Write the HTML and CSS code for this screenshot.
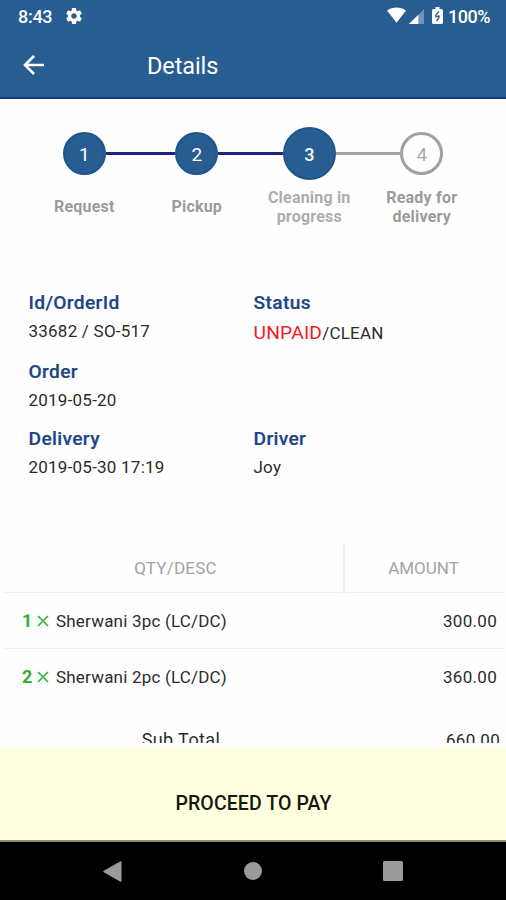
FILE: index.html
```html
<!DOCTYPE html>
<html lang="en">
<head>
<meta charset="utf-8">
<title>Details</title>
<link rel="stylesheet" href="styles.css">
</head>
<body>
<div class="screen">
  <header class="top">
    <div class="statusbar">
      <span class="clock">8:43</span>
      <svg class="gear" width="18" height="18" viewBox="2 2 20 20"><path fill="#fff" fill-rule="evenodd" d="M19.43 12.98c.04-.32.07-.64.07-.98s-.03-.66-.07-.98l2.11-1.65c.19-.15.24-.42.12-.64l-2-3.46c-.12-.22-.39-.3-.61-.22l-2.49 1c-.52-.4-1.08-.73-1.69-.98l-.38-2.65C14.46 2.18 14.25 2 14 2h-4c-.25 0-.46.18-.49.42l-.38 2.65c-.61.25-1.17.59-1.69.98l-2.49-1c-.23-.09-.49 0-.61.22l-2 3.46c-.13.22-.07.49.12.64l2.11 1.65c-.04.32-.07.65-.07.98s.03.66.07.98l-2.11 1.65c-.19.15-.24.42-.12.64l2 3.46c.12.22.39.3.61.22l2.49-1c.52.4 1.08.73 1.69.98l.38 2.65c.03.24.24.42.49.42h4c.25 0 .46-.18.49-.42l.38-2.65c.61-.25 1.17-.59 1.69-.98l2.49 1c.23.09.49 0 .61-.22l2-3.46c.12-.22.07-.49-.12-.64l-2.11-1.65zM12 15.500c-1.930 0-3.500-1.570-3.500-3.500s1.570-3.500 3.500-3.500 3.500 1.570 3.500 3.500-1.570 3.500-3.500 3.500z"/></svg>
      <svg class="wifi" width="19" height="16" viewBox="0 0 20 16" preserveAspectRatio="none"><path fill="#fff" d="M0 3.500C5.500-.6 14.500-.6 20 3.500L10 15.700z"/></svg>
      <svg class="signal" width="15" height="15" viewBox="0 0 16 16"><path fill="#6f93b8" d="M16 0v16H0z"/><path fill="#fff" d="M10 6v10H0z"/></svg>
      <svg class="battery" width="11" height="17" viewBox="0 0 11 17"><path fill="#fff" d="M3.500 0h4v2H9.500q1.500 0 1.500 1.500v12q0 1.500-1.500 1.500h-8Q0 17 0 15.500v-12Q0 2 1.500 2h2z"/><path fill="none" stroke="#275d90" stroke-width="1.300" d="M7 4.500L3.800 8.200v1.500L7 9v1.500L4.500 14"/></svg>
      <span class="percent">100%</span>
    </div>
    <div class="appbar">
      <svg class="back" width="22" height="20" viewBox="0 0 22 20"><path fill="none" stroke="#fff" stroke-width="2.600" d="M21 10H2.500M11 1L2 10l9 9"/></svg>
      <h1 class="title">Details</h1>
    </div>
  </header>

  <ol class="steps">
    <li class="step done"><div class="track"><span class="dot">1</span></div><div class="label">Request</div></li>
    <li class="step done"><div class="track"><span class="dot">2</span></div><div class="label">Pickup</div></li>
    <li class="step current"><div class="track"><span class="dot">3</span></div><div class="label">Cleaning in<br>progress</div></li>
    <li class="step todo"><div class="track"><span class="dot">4</span></div><div class="label">Ready for<br>delivery</div></li>
  </ol>

  <section class="info">
    <div class="field"><h2>Id/OrderId</h2><p>33682 / SO-517</p></div>
    <div class="field"><h2>Status</h2><p class="state"><span class="unpaid">UNPAID</span>/CLEAN</p></div>
    <div class="field wide"><h2>Order</h2><p>2019-05-20</p></div>
    <div class="field"><h2>Delivery</h2><p>2019-05-30 17:19</p></div>
    <div class="field"><h2>Driver</h2><p>Joy</p></div>
  </section>

  <section class="items">
    <div class="row head"><div class="desc">QTY/DESC</div><div class="amount">AMOUNT</div></div>
    <div class="row"><div class="desc"><b class="qty">1</b><svg class="times" width="12" height="12" viewBox="0 0 12 12"><path d="M1 1l10 10M11 1L1 11"/></svg><span>Sherwani 3pc (LC/DC)</span></div><div class="amount">300.00</div></div>
    <div class="row last"><div class="desc"><b class="qty">2</b><svg class="times" width="12" height="12" viewBox="0 0 12 12"><path d="M1 1l10 10M11 1L1 11"/></svg><span>Sherwani 2pc (LC/DC)</span></div><div class="amount">360.00</div></div>
    <div class="row total"><div class="desc">Sub Total</div><div class="amount">660.00</div></div>
  </section>

  <button class="pay">PROCEED TO PAY</button>
  <nav class="navbar">
    <svg width="19" height="21" viewBox="0 0 19 21"><path fill="#9b9b9b" d="M17.500.3q1-.5 1 .7v19q0 1.200-1 .7L.8 11.200q-1-.7 0-1.400z"/></svg>
    <svg width="18" height="18" viewBox="0 0 18 18"><circle cx="9" cy="9" r="9" fill="#9b9b9b"/></svg>
    <svg width="20" height="20" viewBox="0 0 20 20"><rect width="20" height="20" rx="1.500" fill="#9b9b9b"/></svg>
  </nav>
</div>
</body>
</html>
```
FILE: styles.css
```css
* { box-sizing: border-box; }
body { margin: 0; font-family: Roboto, sans-serif; background: #fefefe; color: #2b2b2b; }
h1, h2, p, ol { margin: 0; padding: 0; }
.screen { width: 506px; height: 900px; display: flex; flex-direction: column; overflow: hidden; }

.top { flex: none; height: 99px; background: #275d90; border-bottom: 2px solid #163680; color: #fff; }
.statusbar { height: 32px; display: flex; align-items: center; padding: 0 16px 0 18px; font-size: 18px; font-weight: 500; }
.clock { width: 34px; letter-spacing: -.3px; }
.gear { width: 16px; height: 16px; margin-left: 14px; margin-top: -1px; }
.wifi { margin-left: auto; margin-top: -3px; }
.signal { margin-left: 3px; }
.battery { margin-left: 8px; margin-top: -2px; }
.percent { margin-left: 5px; letter-spacing: -.5px; }
.appbar { height: 65px; display: flex; align-items: center; padding-left: 23px; }
.title { margin-left: 102px; font-size: 23.500px; font-weight: 400; line-height: 28px; padding-top: 3px; letter-spacing: -.1px; }

.steps { flex: none; height: 190px; display: flex; list-style: none; padding: 28px 0 0 28px; }
.step { width: 112.500px; display: flex; flex-direction: column; align-items: center; }
.track { width: 100%; height: 53px; display: flex; align-items: center; }
.track::before, .track::after { content: ""; flex: 1; height: 3px; background: #1f2287; }
.step:first-child .track::before, .step:last-child .track::after { background: none; }
.dot { width: 43px; height: 43px; flex: none; border-radius: 50%; background: #275d90; color: #fff; border: 2px solid #1f558c; display: flex; align-items: center; justify-content: center; font-size: 19px; padding-top: 2px; }
.current .dot { width: 53px; height: 53px; font-weight: 500; font-size: 18px; }
.current .track::after, .todo .track::before { background: #a5a5a5; }
.todo .dot { background: #fefefe; border: 3px solid #a0a0a0; color: #a9a9a9; }
.label { height: 53px; display: flex; align-items: center; text-align: center; font-size: 16px; font-weight: 700; line-height: 19px; letter-spacing: .2px; color: #9b9b9b; }
.current .label { color: #adadad; }

.info { flex: none; height: 254px; display: grid; grid-template-columns: 225px 1fr; grid-template-rows: 69px 67px auto; padding: 1px 0 0 28.500px; }
.wide { grid-column: 1 / 3; }
.field h2 { font-size: 19.200px; font-weight: 500; line-height: 26px; letter-spacing: .35px; color: #1b4585; -webkit-text-stroke: .2px #1b4585; }
.field p { font-size: 17px; line-height: 30px; letter-spacing: .23px; color: #2b2b2b; }
.field .state { line-height: 34px; }
.unpaid { color: #f5191f; font-size: 19.200px; }

.items { height: 200px; overflow: hidden; margin: 0 2px 0 4px; font-size: 17px; letter-spacing: .2px; }
.row { display: flex; height: 56px; align-items: center; border-bottom: 1px solid #f0f0f0; }
.row .desc { width: 341px; flex: none; display: flex; align-items: center; padding-left: 18px; }
.row .amount { flex: 1; text-align: right; padding-right: 7px; letter-spacing: .3px; }
.row.last { border-bottom-color: #fbfbfb; }
.qty { color: #2eb135; font-size: 18px; width: 15px; }
.times { margin-right: 7px; }
.times path { stroke: #35b63c; stroke-width: 1.700; fill: none; }
.head { height: 50px; color: #a3a3a3; }
.head .desc { height: 50px; justify-content: center; padding: 0 0 0 4px; border-right: 2px solid #f3f3f3; }
.row.head .amount { text-align: center; padding: 0 2px 0 0; letter-spacing: 0; }
.total { height: 69px; border: 0; }
.total .desc { justify-content: center; padding-left: 13px; font-size: 18px; letter-spacing: .4px; }
.row.total .amount { padding-right: 4px; }

.pay { flex: none; height: 94px; margin-top: 5px; border: 0; background: #feffdf; color: #17170f; font: 500 19.500px/24px Roboto, sans-serif; letter-spacing: .1px; padding: 19px 0 0 1px; border-bottom: 2px solid #8c8c79; }
.navbar { flex: none; height: 58px; background: #000; display: flex; justify-content: space-between; align-items: center; padding: 0 103px; }
```
